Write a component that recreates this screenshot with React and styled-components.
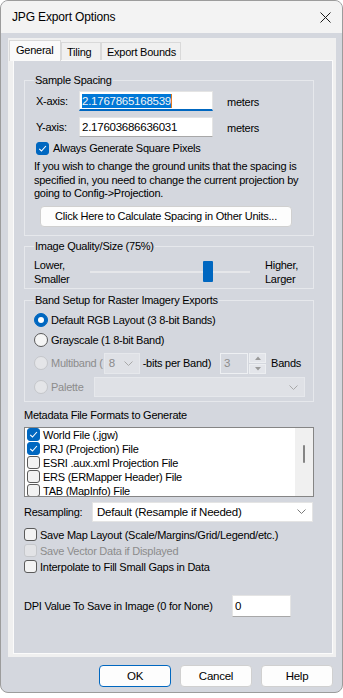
import React from "react";
import styled, { createGlobalStyle } from "styled-components";

const BG = "#d4d7de";

const GlobalStyle = createGlobalStyle`
  html, body {
    margin: 0;
    padding: 0;
    background: #ffffff;
  }
  body {
    font-family: "Liberation Sans", Arial, sans-serif;
    font-size: 11px;
    color: #000;
  }
  * {
    box-sizing: border-box;
  }
`;

const Window = styled.div`
  width: 343px;
  height: 693px;
  border: 1px solid #9c9c9c;
  border-radius: 8px;
  overflow: hidden;
  background: ${BG};
  display: flex;
  flex-direction: column;
  letter-spacing: -0.25px;
`;

const TitleBar = styled.div`
  height: 32px;
  flex: none;
  background: #f3f3f3;
  display: flex;
  align-items: center;
  justify-content: space-between;
  padding: 0 11px 0 11px;
  font-size: 12px;
  letter-spacing: -0.15px;
`;

const Body = styled.div`
  padding: 5px 6px 0 7px;
  display: flex;
  flex-direction: column;
`;

const TabControl = styled.div`
  background: #f0f0f0;
  padding: 0 3px 3px 5px;
  display: flex;
  flex-direction: column;
`;

const TabStrip = styled.div`
  height: 22px;
  display: flex;
  align-items: flex-end;
  margin-left: -4px;
`;

const Tab = styled.div`
  position: relative;
  width: ${(p) => p.$w}px;
  height: ${(p) => (p.$active ? 21 : 18)}px;
  margin-bottom: ${(p) => (p.$active ? -1 : 0)}px;
  background: ${(p) => (p.$active ? "#fafafa" : "#f0f0f0")};
  border: 1px solid #d9d9d9;
  border-bottom: none;
  display: flex;
  align-items: center;
  padding-left: ${(p) => (p.$active ? 6 : 5)}px;
  padding-bottom: ${(p) => (p.$active ? 2 : 0)}px;
  z-index: ${(p) => (p.$active ? 1 : 0)};
`;

const Panel = styled.div`
  height: 594px;
  border: 1px solid #fbfbfb;
  background: ${BG};
  padding: 19px 18px 0 10px;
  display: flex;
  flex-direction: column;
`;

const GroupBox = styled.div`
  position: relative;
  border: 1px solid #e6e8ec;
  margin-top: ${(p) => p.$mt || 0}px;
  padding: ${(p) => p.$pad};
  display: flex;
  flex-direction: column;
`;

const GroupTitle = styled.div`
  position: absolute;
  top: -8px;
  left: 9px;
  padding: 0 1px;
  background: ${BG};
  line-height: 14px;
  white-space: nowrap;
`;

const Row = styled.div`
  display: flex;
  align-items: center;
  height: ${(p) => p.$h || 20}px;
  margin-top: ${(p) => p.$mt || 0}px;
  margin-left: ${(p) => p.$ml || 0}px;
  gap: ${(p) => p.$gap || 0}px;
  white-space: nowrap;
  color: ${(p) => (p.$disabled ? "#8c8c8c" : "#000")};
`;

const FieldLabel = styled.div`
  width: ${(p) => p.$w}px;
  margin-left: ${(p) => p.$ml || 0}px;
  flex: none;
`;

const TextBox = styled.div`
  width: ${(p) => p.$w}px;
  height: ${(p) => p.$h || 20}px;
  flex: none;
  background: #ffffff;
  border: 1px solid #e4e4e4;
  border-bottom: ${(p) => (p.$focus ? "2px solid #0067c0" : "1px solid #a8a8a8")};
  padding: 0 0 0 2px;
  display: flex;
  align-items: center;
  font-size: 11.5px;
`;

const Selected = styled.span`
  background: #0078d7;
  color: #f4f4f4;
  padding: 1px 0;
  border-right: 1px solid #e07b20;
`;

const Unit = styled.div`
  margin-left: 14px;
  margin-top: 2px;
`;

const Note = styled.div`
  margin-top: 5px;
  margin-left: -1px;
  line-height: 13.5px;
  white-space: nowrap;
`;

const PushButton = styled.div`
  width: ${(p) => p.$w}px;
  height: ${(p) => p.$h || 22}px;
  margin-top: ${(p) => p.$mt || 0}px;
  margin-left: ${(p) => p.$ml || 0}px;
  flex: none;
  background: #fdfdfd;
  border: 1px solid ${(p) => (p.$default ? "#0067c0" : "#d0d0d0")};
  border-radius: 4px;
  display: flex;
  align-items: center;
  justify-content: center;
  font-size: ${(p) => p.$fs || 11}px;
`;

const TwoLine = styled.div`
  width: ${(p) => p.$w}px;
  margin-left: ${(p) => p.$ml || 0}px;
  flex: none;
  line-height: 14px;
`;

const SliderTrack = styled.div`
  position: relative;
  width: 160px;
  height: 28px;
  flex: none;
  &::before {
    content: "";
    position: absolute;
    left: 0;
    right: 0;
    top: 13px;
    height: 2px;
    background: #e6e7ea;
  }
`;

const SliderThumb = styled.div`
  position: absolute;
  top: 3px;
  width: 10px;
  height: 21px;
  background: #0067c0;
  border-radius: 1px;
`;

const RadioDot = styled.div`
  width: 14px;
  height: 14px;
  flex: none;
  border-radius: 50%;
  background: ${(p) => (p.$on ? "#0067c0" : p.$disabled ? "#e4e5e8" : "#f5f5f5")};
  border: 1px solid ${(p) => (p.$on ? "#0067c0" : p.$disabled ? "#c4c6ca" : "#5a5a5a")};
  display: flex;
  align-items: center;
  justify-content: center;
  &::after {
    content: "";
    display: ${(p) => (p.$on ? "block" : "none")};
    width: 6px;
    height: 6px;
    border-radius: 50%;
    background: #ffffff;
  }
`;

const Box = styled.div`
  width: 13px;
  height: 13px;
  flex: none;
  border-radius: 3px;
  background: ${(p) => (p.$on ? "#0067c0" : p.$disabled ? "#e2e3e6" : "#f3f3f3")};
  border: 1px solid ${(p) => (p.$on ? "#0067c0" : p.$disabled ? "#c6c8cc" : "#5a5a5a")};
  display: flex;
  align-items: center;
  justify-content: center;
`;

const Combo = styled.div`
  width: ${(p) => p.$w}px;
  height: ${(p) => p.$h || 20}px;
  margin-left: ${(p) => p.$ml || 0}px;
  flex: none;
  background: ${(p) => (p.$disabled ? "#dfe1e6" : "#ffffff")};
  border: 1px solid ${(p) => (p.$disabled ? "#e6e8ec" : "#e4e4e4")};
  display: flex;
  align-items: center;
  justify-content: space-between;
  padding: 0 6px 0 4px;
  color: ${(p) => (p.$disabled ? "#8c8c8c" : "#000")};
  font-size: 11.5px;
`;

const Inline = styled.span`
  margin-left: ${(p) => p.$ml || 0}px;
  color: ${(p) => (p.$dark ? "#000" : "inherit")};
`;

const Spin = styled.div`
  display: flex;
  margin-left: 9px;
  height: 21px;
`;

const SpinText = styled.div`
  width: 28px;
  border: 1px solid #eef0f3;
  background: #d6d9e0;
  color: #8c8c8c;
  padding-left: 3px;
  font-size: 11.5px;
  line-height: 18px;
`;

const SpinButtons = styled.div`
  width: 17px;
  display: flex;
  flex-direction: column;
  gap: 1px;
  margin-left: 1px;
`;

const SpinBtn = styled.div`
  flex: 1;
  background: #e3e5ea;
  border: 1px solid #eceef1;
  display: flex;
  align-items: center;
  justify-content: center;
`;

const Caption = styled.div`
  margin-top: ${(p) => p.$mt || 0}px;
  line-height: 14px;
`;

const ListBox = styled.div`
  margin-top: 5px;
  height: 70px;
  background: #ffffff;
  border: 1px solid #858585;
  display: flex;
  overflow: hidden;
`;

const ListItems = styled.div`
  flex: 1;
  display: flex;
  flex-direction: column;
`;

const ListItem = styled.div`
  height: 14px;
  flex: none;
  display: flex;
  align-items: center;
  gap: 3px;
  padding-left: 2px;
  white-space: nowrap;
`;

const ScrollBar = styled.div`
  width: 18px;
  background: #f0f0f0;
  display: flex;
  justify-content: center;
  padding-top: 17px;
`;

const ScrollThumb = styled.div`
  width: 2px;
  height: 18px;
  background: #858585;
  border-radius: 1px;
`;

const ButtonBar = styled.div`
  display: flex;
  justify-content: flex-end;
  gap: 9px;
  margin-top: 8px;
  padding-right: 3px;
`;

const Check = () => (
  <svg width="9" height="9" viewBox="0 0 9 9">
    <path d="M1.2 4.8 L3.5 7 L7.9 2" fill="none" stroke="#ffffff" strokeWidth="1.1" />
  </svg>
);

const Chevron = ({ color = "#7a7a7a" }) => (
  <svg width="9" height="5" viewBox="0 0 9 5">
    <path d="M0.5 0.5 L4.5 4.5 L8.5 0.5" fill="none" stroke={color} strokeWidth="1" />
  </svg>
);

const Arrow = ({ up }) => (
  <svg width="6" height="4" viewBox="0 0 6 4">
    <path d={up ? "M0 4 L3 0.5 L6 4 Z" : "M0 0 L3 3.5 L6 0 Z"} fill="#9a9a9a" />
  </svg>
);

const CheckBox = ({ on, disabled }) => (
  <Box $on={on} $disabled={disabled}>
    {on && <Check />}
  </Box>
);

const Slider = ({ value, width = 160, thumb = 10 }) => (
  <SliderTrack>
    <SliderThumb style={{ left: `${(value / 100) * (width - thumb)}px` }} />
  </SliderTrack>
);

const metadata = [
  { label: "World File (.jgw)", on: true },
  { label: "PRJ (Projection) File", on: true },
  { label: "ESRI .aux.xml Projection File", on: false },
  { label: "ERS (ERMapper Header) File", on: false },
  { label: "TAB (MapInfo) File", on: false },
];

export default function App() {
  return (
    <>
      <GlobalStyle />
      <Window>
        <TitleBar>
          <span>JPG Export Options</span>
          <svg width="11" height="11" viewBox="0 0 11 11">
            <path d="M0.5 0.5 L10.5 10.5 M10.5 0.5 L0.5 10.5" stroke="#1a1a1a" strokeWidth="1" />
          </svg>
        </TitleBar>
        <Body>
          <TabControl>
            <TabStrip>
              <Tab $active $w={52}>General</Tab>
              <Tab $w={40}>Tiling</Tab>
              <Tab $w={80}>Export Bounds</Tab>
            </TabStrip>
            <Panel>
              <GroupBox $pad="10px 0 8px 10px">
                <GroupTitle>Sample Spacing</GroupTitle>
                <Row>
                  <FieldLabel $w={43} $ml={1}>X-axis:</FieldLabel>
                  <TextBox $w={134} $focus>
                    <Selected>2.1767865168539</Selected>
                  </TextBox>
                  <Unit>meters</Unit>
                </Row>
                <Row $mt={6}>
                  <FieldLabel $w={43} $ml={1}>Y-axis:</FieldLabel>
                  <TextBox $w={134}>2.17603686636031</TextBox>
                  <Unit>meters</Unit>
                </Row>
                <Row $h={14} $mt={4} $ml={1} $gap={4}>
                  <CheckBox on />
                  Always Generate Square Pixels
                </Row>
                <Note>
                  If you wish to change the ground units that the spacing is
                  <br />
                  specified in, you need to change the current projection by
                  <br />
                  going to Config-&gt;Projection.
                </Note>
                <PushButton $w={252} $h={21} $mt={5} $ml={5}>
                  Click Here to Calculate Spacing in Other Units...
                </PushButton>
              </GroupBox>

              <GroupBox $mt={10} $pad="11px 0 2px 9px">
                <GroupTitle>Image Quality/Size (75%)</GroupTitle>
                <Row $h={28}>
                  <TwoLine $w={56}>
                    Lower,
                    <br />
                    Smaller
                  </TwoLine>
                  <Slider value={75} />
                  <TwoLine $w={50} $ml={15}>
                    Higher,
                    <br />
                    Larger
                  </TwoLine>
                </Row>
              </GroupBox>

              <GroupBox $mt={11} $pad="9px 0 3px 9px">
                <GroupTitle>Band Setup for Raster Imagery Exports</GroupTitle>
                <Row $gap={3}>
                  <RadioDot $on />
                  Default RGB Layout (3 8-bit Bands)
                </Row>
                <Row $gap={3}>
                  <RadioDot />
                  Grayscale (1 8-bit Band)
                </Row>
                <Row $h={23} $mt={2} $disabled>
                  <RadioDot $disabled />
                  <Inline $ml={3}>Multiband (</Inline>
                  <Combo $w={36} $h={21} $ml={1} $disabled>
                    8
                    <Chevron color="#a8a8a8" />
                  </Combo>
                  <Inline $ml={3} $dark>-bits per Band)</Inline>
                  <Spin>
                    <SpinText>3</SpinText>
                    <SpinButtons>
                      <SpinBtn>
                        <Arrow up />
                      </SpinBtn>
                      <SpinBtn>
                        <Arrow />
                      </SpinBtn>
                    </SpinButtons>
                  </Spin>
                  <Inline $ml={5} $dark>Bands</Inline>
                </Row>
                <Row $h={21} $mt={2} $disabled>
                  <RadioDot $disabled />
                  <Inline $ml={3}>Palette</Inline>
                  <Combo $w={211} $ml={10} $disabled>
                    <span />
                    <Chevron color="#a8a8a8" />
                  </Combo>
                </Row>
              </GroupBox>

              <Caption $mt={6}>Metadata File Formats to Generate</Caption>
              <ListBox>
                <ListItems>
                  {metadata.map((m) => (
                    <ListItem key={m.label}>
                      <CheckBox on={m.on} />
                      {m.label}
                    </ListItem>
                  ))}
                </ListItems>
                <ScrollBar>
                  <ScrollThumb />
                </ScrollBar>
              </ListBox>

              <Row $mt={5}>
                <FieldLabel $w={68}>Resampling:</FieldLabel>
                <Combo $w={221}>
                  Default (Resample if Needed)
                  <Chevron />
                </Combo>
              </Row>

              <Row $h={16} $mt={5} $gap={3}>
                <CheckBox />
                Save Map Layout (Scale/Margins/Grid/Legend/etc.)
              </Row>
              <Row $h={16} $gap={3} $disabled>
                <CheckBox disabled />
                Save Vector Data if Displayed
              </Row>
              <Row $h={16} $gap={3}>
                <CheckBox />
                Interpolate to Fill Small Gaps in Data
              </Row>

              <Row $h={22} $mt={20}>
                <FieldLabel $w={208}>DPI Value To Save in Image (0 for None)</FieldLabel>
                <TextBox $w={59} $h={22}>0</TextBox>
              </Row>
            </Panel>
          </TabControl>
          <ButtonBar>
            <PushButton $w={72} $fs={11.5} $default>OK</PushButton>
            <PushButton $w={72} $fs={11.5}>Cancel</PushButton>
            <PushButton $w={72} $fs={11.5}>Help</PushButton>
          </ButtonBar>
        </Body>
      </Window>
    </>
  );
}
